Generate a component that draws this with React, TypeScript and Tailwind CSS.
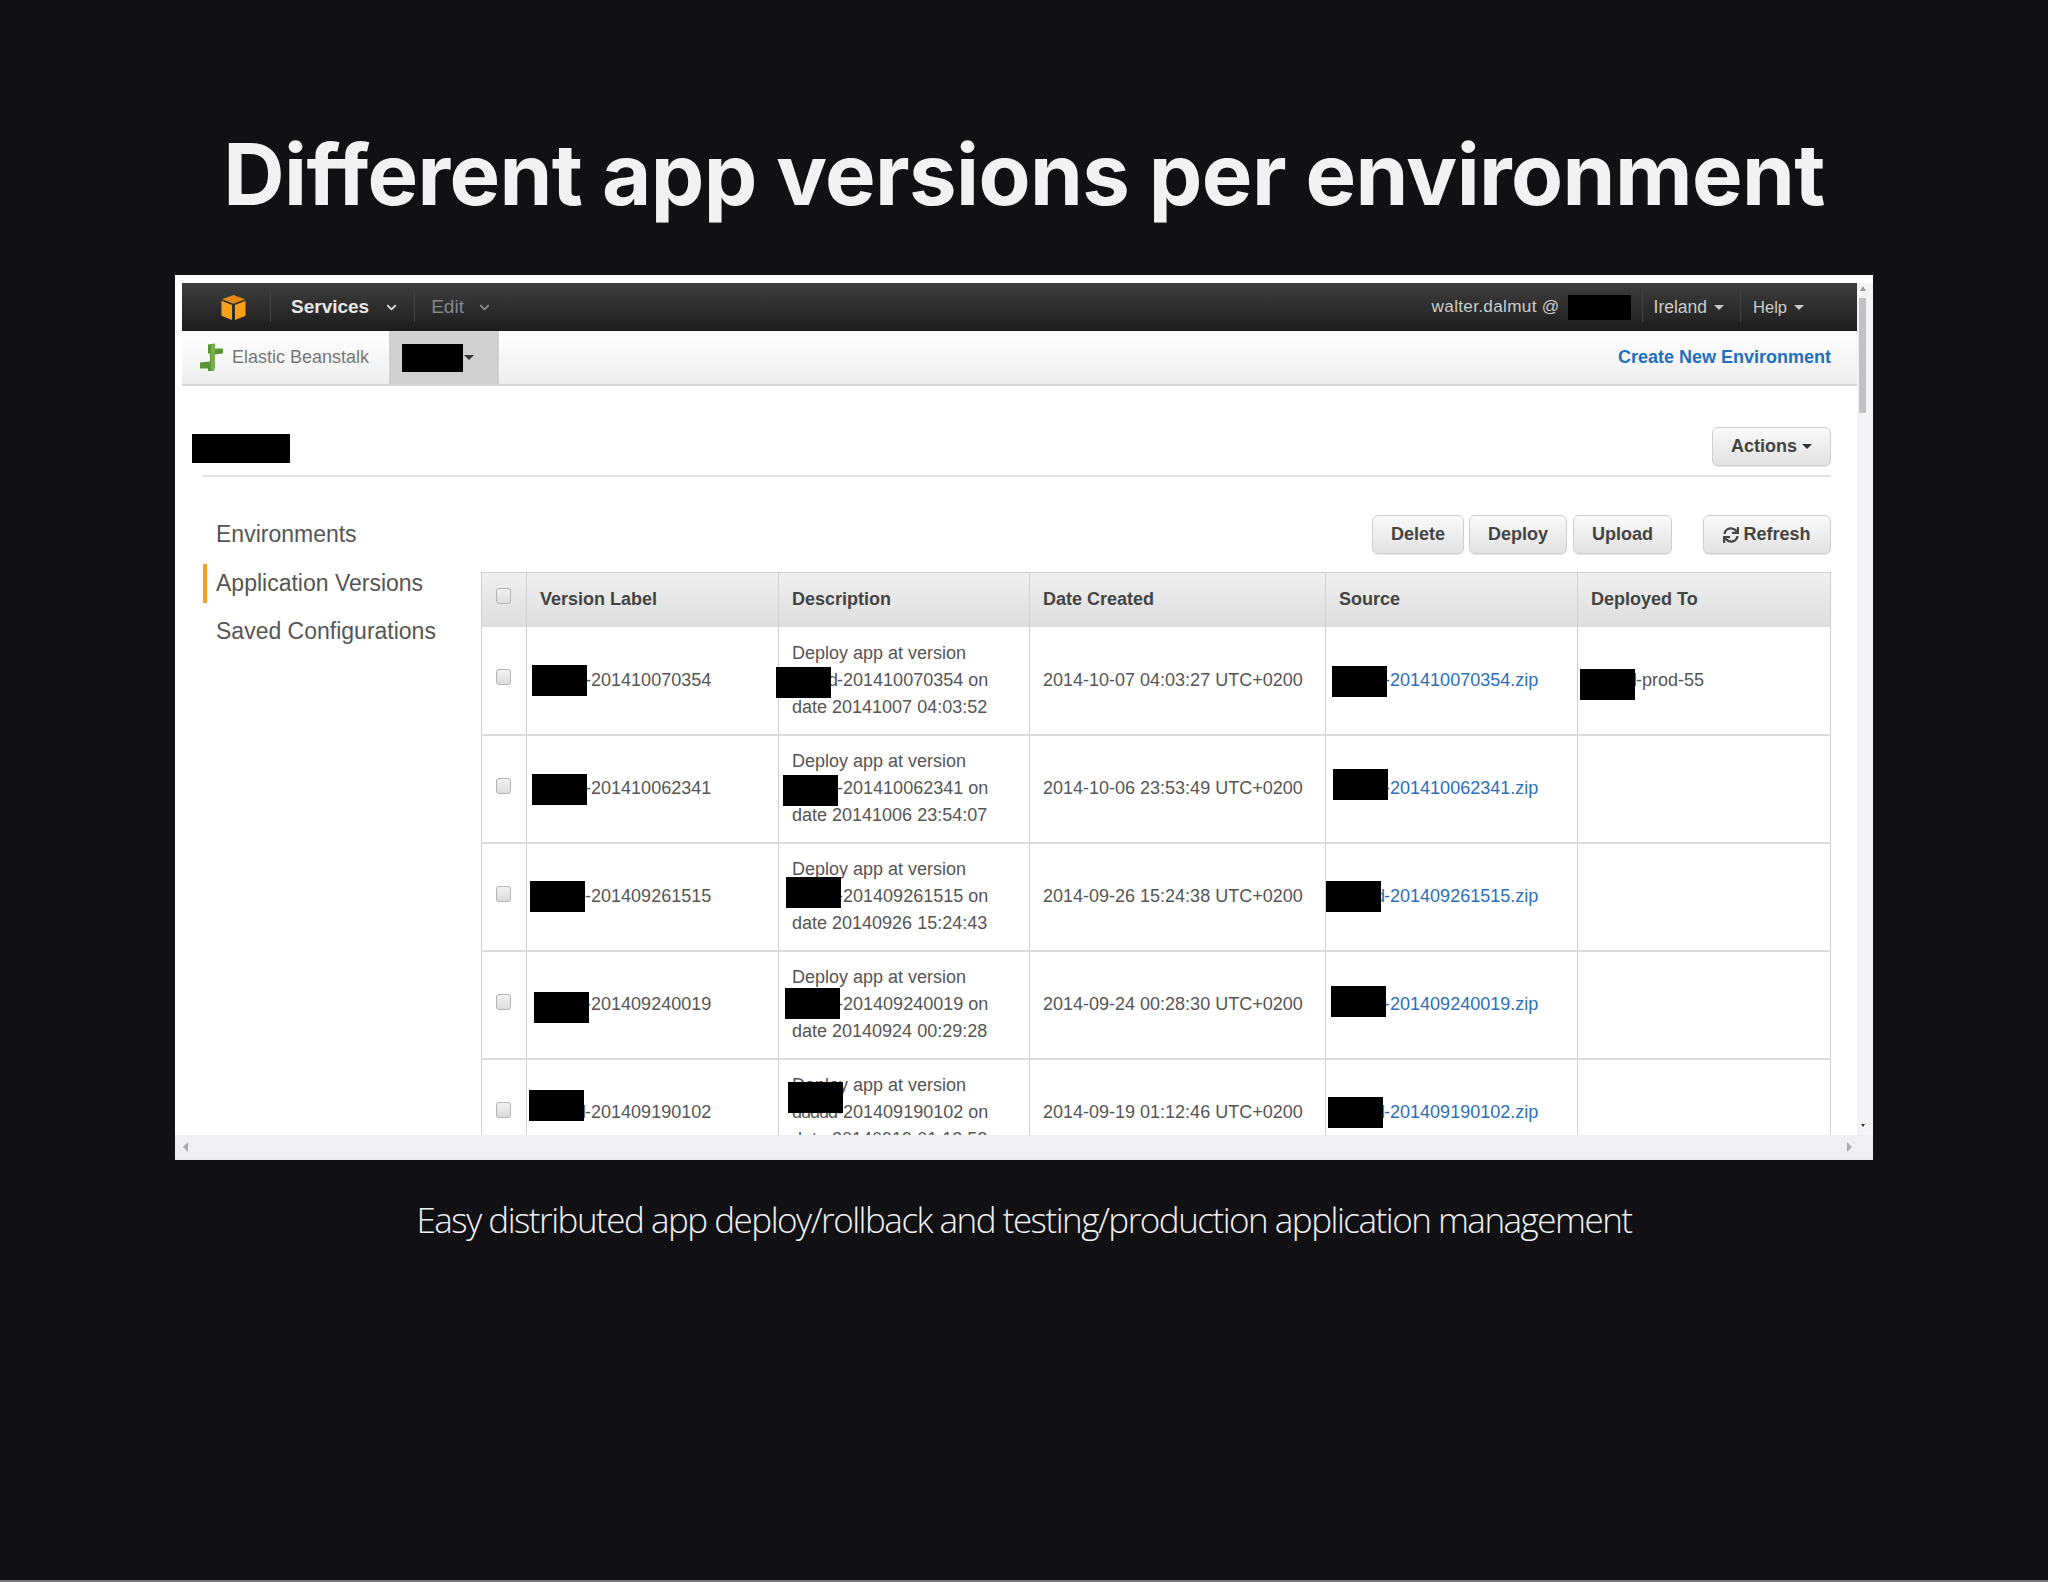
import React from "react";
import { ChevronDown } from "lucide-react";
import { FaSync } from "react-icons/fa";

type Row = {
  version: string;
  date: string;
  desc: string;
  vBox: string;
  dBox: string;
  sBox: string;
};

const rows: Row[] = [
  { version: "201410070354", date: "2014-10-07 04:03:27 UTC+0200", desc: "20141007 04:03:52", vBox: "left-[5px] top-[38px]", dBox: "left-[-3px] top-[40px]", sBox: "left-[6px] top-[39px]" },
  { version: "201410062341", date: "2014-10-06 23:53:49 UTC+0200", desc: "20141006 23:54:07", vBox: "left-[5px] top-[38px]", dBox: "left-[4px] top-[39px]", sBox: "left-[7px] top-[33px]" },
  { version: "201409261515", date: "2014-09-26 15:24:38 UTC+0200", desc: "20140926 15:24:43", vBox: "left-[3px] top-[37px]", dBox: "left-[7px] top-[33px]", sBox: "left-[0px] top-[37px]" },
  { version: "201409240019", date: "2014-09-24 00:28:30 UTC+0200", desc: "20140924 00:29:28", vBox: "left-[7px] top-[40px]", dBox: "left-[6px] top-[36px]", sBox: "left-[5px] top-[34px]" },
  { version: "201409190102", date: "2014-09-19 01:12:46 UTC+0200", desc: "20140919 01:12:52", vBox: "left-[2px] top-[30px]", dBox: "left-[9px] top-[22px]", sBox: "left-[2px] top-[37px]" },
];

function Box({ className }: { className: string }) {
  return <span className={"absolute z-10 h-[31px] w-[55px] bg-black " + className} />;
}

function Caret({ className }: { className: string }) {
  return <span className={"inline-block h-0 w-0 border-x-[5px] border-t-[5px] border-x-transparent " + className} />;
}

function Prefix() {
  return <span className="tracking-[-1px]">dudud</span>;
}

function Btn({ children, className }: { children: React.ReactNode; className: string }) {
  return (
    <button className={"flex h-[39px] items-center justify-center rounded-[6px] border border-[#cfcfcf] bg-gradient-to-b from-[#fafafa] to-[#e2e2e2] text-[18px] font-bold text-[#444] shadow-[0_1px_1px_rgba(0,0,0,0.1)] " + className}>
      {children}
    </button>
  );
}

function Check() {
  return <span className="block h-[16px] w-[15px] rounded-[3px] border border-[#b4b4b4] bg-gradient-to-b from-[#f2f2f2] to-[#dcdcdc]" />;
}

function Cube() {
  return (
    <svg width="28" height="27" viewBox="0 0 28 27">
      <path d="M14 0.5 L26 5 L14 9.5 L2 5 Z" fill="#e58a10" />
      <path d="M1.5 6.5 L12.5 10.8 V26.5 L1.5 22 Z" fill="#f9a01b" />
      <path d="M26.5 6.5 L15.5 10.8 V26.5 L26.5 22 Z" fill="#f9a01b" />
    </svg>
  );
}

function Stalk() {
  return (
    <svg width="23" height="29" viewBox="0 0 23 28">
      <path d="M8 1 L15 0 V5 L23 5 V10 L15 11 V22 L14 27.5 L8 27.5 V25 L0 25 V19 L10 18 V10 L8 10 Z" fill="#5b9332" />
      <path d="M11 1 H15 V22 L14 27 H11 Z" fill="#7aae48" />
    </svg>
  );
}

export default function App() {
  return (
    <div className="flex h-[1582px] w-[2048px] flex-col items-center overflow-hidden bg-[#111114] font-['Liberation_Sans',Arial,sans-serif]">
      <h1 className="flex h-[275px] items-start pt-[125px] font-['Inter',sans-serif] text-[85px] font-bold leading-[100px] tracking-[-0.6px] text-[#f2f2f2]">
        Different app versions per environment
      </h1>

      <div className="flex h-[885px] w-[1698px] flex-col overflow-hidden bg-white pl-[7px] pt-[8px]">
        <div className="flex h-[852px] w-full">
          <div className="relative w-[1675px] overflow-hidden">
            {/* top nav */}
            <div className="flex h-[48px] items-center bg-gradient-to-b from-[#3f3f3f] to-[#1d1d1d] text-[#ddd]">
              <span className="ml-[38px] flex w-[27px] justify-center"><Cube /></span>
              <span className="ml-[23px] h-[30px] w-px bg-[#444]" />
              <span className="ml-[20px] text-[19px] font-bold text-[#e8e8e8]">Services</span>
              <ChevronDown className="ml-[15px] text-[#ddd]" size={15} strokeWidth={3} />
              <span className="ml-[15px] h-[30px] w-px bg-[#444]" />
              <span className="ml-[16px] text-[19px] text-[#888]">Edit</span>
              <ChevronDown className="ml-[13px] text-[#888]" size={15} strokeWidth={3} />
              <span className="ml-auto text-[17.2px] tracking-[0.3px] text-[#ccc]">walter.dalmut @</span>
              <span className="ml-[8px] h-[25px] w-[63px] bg-black" />
              <span className="ml-[11px] h-[30px] w-px bg-[#444]" />
              <span className="ml-[11px] text-[17.5px] text-[#ccc]">Ireland</span>
              <Caret className="ml-[7px] border-t-[#ccc]" />
              <span className="ml-[16px] h-[30px] w-px bg-[#444]" />
              <span className="ml-[12px] text-[16.5px] text-[#ccc]">Help</span>
              <Caret className="ml-[7px] mr-[53px] border-t-[#ccc]" />
            </div>

            {/* sub nav */}
            <div className="flex h-[55px] items-stretch border-b-2 border-[#d6d6d6] bg-gradient-to-b from-white to-[#eeeeee]">
              <span className="ml-[18px] flex items-center"><Stalk /></span>
              <span className="ml-[9px] flex w-[157px] items-center text-[18px] text-[#777]">Elastic Beanstalk</span>
              <div className="flex w-[110px] items-center bg-[#d0d0d0] pl-[13px]">
                <span className="h-[28px] w-[61px] bg-black" />
                <Caret className="ml-[1px] border-t-[#333]" />
              </div>
              <a className="ml-auto mr-[26px] flex items-center text-[18px] font-bold text-[#1e6fbf]">Create New Environment</a>
            </div>

            {/* title */}
            <div className="relative ml-[21px] mr-[26px] flex h-[91px] items-start justify-end border-b-2 border-[#e2e2e2] pt-[41px]">
              <span className="absolute left-[-11px] top-[48px] h-[29px] w-[98px] bg-black" />
              <Btn className="w-[119px]">
                Actions
                <Caret className="ml-[5px] border-t-[#333]" />
              </Btn>
            </div>

            {/* body */}
            <div className="ml-[21px] mr-[26px] flex">
              <nav className="flex w-[279px] flex-col pt-[33px] text-[23px] leading-[48.5px] text-[#555]">
                <a className="pl-[13px]">Environments</a>
                <a className="relative pl-[13px]">
                  <span className="absolute left-0 top-[5px] h-[39px] w-[4px] bg-[#f7a11e]" />
                  Application Versions
                </a>
                <a className="pl-[13px]">Saved Configurations</a>
              </nav>
              <div className="flex-1">
                <div className="mt-[38px] flex h-[39px] items-center">
                  <Btn className="ml-auto w-[92px]">Delete</Btn>
                  <Btn className="ml-[5px] w-[98px]">Deploy</Btn>
                  <Btn className="ml-[6px] w-[99px]">Upload</Btn>
                  <Btn className="ml-[31px] w-[128px]">
                    <FaSync className="mr-[4px]" size={16} />
                    Refresh
                  </Btn>
                </div>
                <table className="mt-[18px] w-[1349px] table-fixed border-collapse border-l border-r border-[#cfcfd2] text-[18px] leading-[27px] text-[#555]">
                  <colgroup>
                    <col className="w-[45px]" />
                    <col className="w-[252px]" />
                    <col className="w-[251px]" />
                    <col className="w-[296px]" />
                    <col className="w-[252px]" />
                    <col className="w-[253px]" />
                  </colgroup>
                  <thead>
                    <tr className="h-[54px] bg-gradient-to-b from-[#f0f0f0] to-[#dddddd] text-left font-bold text-[#444]">
                      <th className="border-r border-t border-[#cfcfd2] pb-[7px] pl-[14px]"><Check /></th>
                      <th className="border-r border-t border-[#cfcfd2] pl-[13px] font-bold">Version Label</th>
                      <th className="border-r border-t border-[#cfcfd2] pl-[13px] font-bold">Description</th>
                      <th className="border-r border-t border-[#cfcfd2] pl-[13px] font-bold">Date Created</th>
                      <th className="border-r border-t border-[#cfcfd2] pl-[13px] font-bold">Source</th>
                      <th className="border-t border-[#cfcfd2] pl-[13px] font-bold">Deployed To</th>
                    </tr>
                  </thead>
                  <tbody>
                    {rows.map((r, i) => (
                      <tr key={r.version} className="h-[108px] border-b-2 border-[#dcdcdf]">
                        <td className="border-r border-[#cfcfd2] pb-[6px] pl-[14px]"><Check /></td>
                        <td className="relative border-r border-[#cfcfd2] pl-[13px]">
                          <Box className={r.vBox} />
                          <Prefix />-{r.version}
                        </td>
                        <td className="relative border-r border-[#cfcfd2] pl-[13px]">
                          <Box className={r.dBox} />
                          Deploy app at version
                          <br />
                          <Prefix />-{r.version} on
                          <br />
                          date {r.desc}
                        </td>
                        <td className="border-r border-[#cfcfd2] pl-[13px]">{r.date}</td>
                        <td className="relative border-r border-[#cfcfd2] pl-[13px] text-[#2b6fb8]">
                          <Box className={r.sBox} />
                          <Prefix />-{r.version}.zip
                        </td>
                        <td className="relative pl-[13px]">
                          {i === 0 && (
                            <>
                              <Box className="left-[2px] top-[42px]" />
                              <Prefix />-prod-55
                            </>
                          )}
                        </td>
                      </tr>
                    ))}
                  </tbody>
                </table>
              </div>
            </div>
          </div>

          {/* vertical scrollbar */}
          <div className="relative w-[16px] bg-[#f4f4f6]">
            <span className="absolute left-[2px] top-[15px] h-[115px] w-[7px] bg-[#c2c2c4]" />
            <span className="absolute left-[3px] top-[3px] h-0 w-0 border-x-[3px] border-b-[5px] border-x-transparent border-b-[#999]" />
            <span className="absolute bottom-[8px] left-[4px] h-0 w-0 border-x-[2px] border-t-[3px] border-x-transparent border-t-[#333]" />
          </div>
        </div>

        {/* horizontal scrollbar */}
        <div className="-ml-[7px] flex h-[25px] items-center justify-between border-b-[2px] border-[#e8e8e8] bg-[#f0f0f2] px-[8px]">
          <span className="h-0 w-0 border-y-[5px] border-r-[5px] border-y-transparent border-r-[#aaa]" />
          <span className="mr-[13px] h-0 w-0 border-y-[5px] border-l-[5px] border-y-transparent border-l-[#aaa]" />
        </div>
      </div>

      <p className="mt-[36px] font-['Open_Sans',sans-serif] text-[35px] font-light leading-[48px] tracking-[-1.5px] text-[#f2f2f2]">
        Easy distributed app deploy/rollback and testing/production application management
      </p>

      <div className="mt-auto h-[2px] w-full bg-[#777]" />
    </div>
  );
}
